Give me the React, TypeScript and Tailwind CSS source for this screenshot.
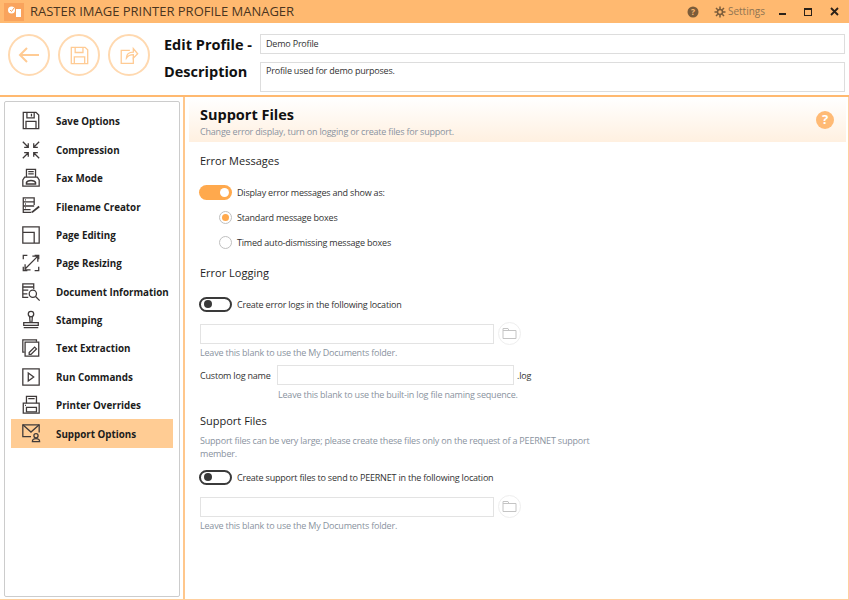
import React from "react";

const ic = { fill: "none", stroke: "#3f3a3a", strokeWidth: 1.4 } as const;

function Icon({ name }: { name: string }) {
  const p: Record<string, React.ReactNode> = {
    save: <><path d="M2.500 1.500h14l3 3v15h-17z" /><path d="M6.500 1.500v6h8v-6M11.500 3v3" /><path d="M5.500 19.500v-8h11v8" /></>,
    comp: <><path d="M2 2l6 6M8 3.500V8H3.500M20 2l-6 6M14 3.500V8h4.500M2 20l6-6M8 18.500V14H3.500M20 20l-6-6M14 18.500V14h4.500" /></>,
    fax: <><path d="M6 10V1.500h10V10M8 4h6M8 6.500h6" /><path d="M4 10h14l2 3v7H2v-7z" /><path d="M6 16c1-3 9-3 10 0v1.500H6z" strokeWidth="1.600" /></>,
    file: <><path d="M14.500 10V2H2.500v16h9" /><path d="M2.500 6.500h12M2.500 11h12M2.500 15h8M4.500 4.300h1M4.500 8.800h1M4.500 13h1" /><path d="M12 18l8-6.500" strokeWidth="2" /></>,
    edit: <><path d="M2 2h18v18H2zM2 8h12.500v12" /></>,
    resize: <><path d="M7 2.500H2.500V7M2.500 15v4.500H7M15 19.500h4.500V15M15 2.500h4.500V7" /><path d="M5 17L18 4M12.500 3.500h6v6M4.500 12.500v6h6" /></>,
    doc: <><path d="M14 8V2H2v15h6" /><path d="M2 5.500h12M2 9h6M2 13h5" /><circle cx="13" cy="13" r="4" /><path d="M16 16l4.500 4.500" /></>,
    stamp: <><circle cx="11" cy="4.500" r="3" /><path d="M9.500 7.500l.5 6h2l.5-6M3 14h16v3H3zM3 19.500h16" /></>,
    text: <><path d="M4 15.500H2V2h15v2" /><path d="M4.500 4.500H19.500V20H4.500z" /><path d="M9 16l6-6 2 2-6 6H9z" /></>,
    run: <><path d="M2 2h18v18H2z" /><path d="M8 6.500l6 4.500-6 4.500z" /></>,
    print: <><path d="M6 9V1.500h11V9M8 4h7" /><path d="M2.500 9h17.500v11H2.500z" /><path d="M6 13.500h11v5H6zM4.500 11.500h1" /></>,
    support: <><path d="M11 15H2V2h18v8.500" /><path d="M2 2l9 8 9-8" /><circle cx="16.500" cy="14" r="2.300" /><path d="M12.500 20.500c0-4.500 8-4.500 8 0z" /></>,
  };
  return (
    <svg width="20" height="20" viewBox="0 0 22 22" {...ic}>
      {p[name]}
    </svg>
  );
}

const items: [string, string][] = [
  ["save", "Save Options"],
  ["comp", "Compression"],
  ["fax", "Fax Mode"],
  ["file", "Filename Creator"],
  ["edit", "Page Editing"],
  ["resize", "Page Resizing"],
  ["doc", "Document Information"],
  ["stamp", "Stamping"],
  ["text", "Text Extraction"],
  ["run", "Run Commands"],
  ["print", "Printer Overrides"],
  ["support", "Support Options"],
];

function Toggle({ on }: { on?: boolean }) {
  return on ? (
    <div className="w-[33px] h-[15px] -ml-[1px] rounded-full bg-[#ffa94d] flex items-center justify-end pr-[3px]">
      <div className="w-[9px] h-[9px] rounded-full bg-white" />
    </div>
  ) : (
    <div className="w-[33px] h-[15px] -ml-[1px] rounded-full border-2 border-[#3a3a3a] bg-white flex items-center pl-[3px]">
      <div className="w-[8px] h-[8px] rounded-full bg-[#3a3a3a]" />
    </div>
  );
}

function Round({ children }: { children: React.ReactNode }) {
  return (
    <div className="w-[42px] h-[42px] rounded-full border-2 border-[#ffd9b0] flex items-center justify-center shrink-0">
      {children}
    </div>
  );
}

function Folder() {
  return (
    <div className="w-[23px] h-[23px] rounded-full border border-[#eeeeee] flex items-center justify-center shrink-0">
      <svg width="15" height="13" viewBox="0 0 15 13" fill="none" stroke="#c4c4c4" strokeWidth="1">
        <path d="M1 11.500V1.500h5l1 2h7v8zM1 3.500h6" />
      </svg>
    </div>
  );
}

function PathRow() {
  return (
    <div className="flex items-center gap-[4px] h-[23px]">
      <div className="w-[294px] h-[20px] border border-[#e3e3e3]" />
      <Folder />
    </div>
  );
}

const hint = "text-[9px] tracking-[-0.2px] leading-[13px] text-[#8a93a0] whitespace-nowrap";
const label = "text-[9px] tracking-[-0.2px] leading-[13px] text-[#333333] whitespace-nowrap";
const h2 = "text-[11px] leading-[16px] font-medium text-[#1e1e1e]";

export default function App() {
  return (
    <div
      className="w-[849px] h-[600px] bg-white flex flex-col overflow-hidden"
      style={{ fontFamily: '"Open Sans", "Noto Sans", sans-serif' }}
    >
      <div className="h-[23px] bg-[#ffb970] flex items-center shrink-0">
        <div className="w-[20px] h-[18px] ml-[4px] bg-[#f9a35c] flex items-center justify-center">
          <svg width="15" height="13" viewBox="0 0 15 13">
            <circle cx="4.500" cy="5" r="3.500" fill="#fff" />
            <path d="M9 4h5v8H9z" fill="#fff" />
            <path d="M3 5l1.500 1.500L7 3" stroke="#f9a35c" fill="none" />
          </svg>
        </div>
        <div className="ml-[6px] text-[13px] text-[#4a3520] whitespace-nowrap">RASTER IMAGE PRINTER PROFILE MANAGER</div>
        <div className="ml-auto flex items-center text-[#7b5c3a]">
          <svg width="12" height="12" viewBox="0 0 12 12">
            <circle cx="6" cy="6" r="5.500" fill="#7b5c3a" />
            <text x="6" y="9" textAnchor="middle" fontSize="8.500" fontWeight="700" fill="#ffb970">?</text>
          </svg>
          <svg className="ml-[15px]" width="12" height="12" viewBox="0 0 24 24" fill="none" stroke="#7b5c3a" strokeWidth="3">
            <circle cx="12" cy="12" r="5" />
            <path d="M12 1v5M12 18v5M1 12h5M18 12h5M4 4l3.500 3.500M16.500 16.500L20 20M20 4l-3.500 3.500M7.500 16.500L4 20" />
          </svg>
          <span className="ml-[2px] text-[10px] text-[#8f7452]">Settings</span>
          <div className="ml-[14px] w-[7px] h-[2px] mt-[5px] bg-[#2b2118]" />
          <div className="ml-[18px] w-[8px] h-[8px] border border-t-2 border-[#2b2118]" />
          <svg className="ml-[18px] mr-[10px]" width="9" height="9" viewBox="0 0 9 9" stroke="#2b2118" strokeWidth="1.800">
            <path d="M1 1l7 7M8 1l-7 7" />
          </svg>
        </div>
      </div>

      <div className="h-[74px] border-b-2 border-[#ffb970] flex items-start shrink-0 pl-[8px] pt-[11px]">
        <div className="flex gap-[8px]">
          <Round>
            <svg width="22" height="18" viewBox="0 0 22 18" fill="none" stroke="#ffcb94" strokeWidth="2">
              <path d="M21 9H2M9 2L2 9l7 7" />
            </svg>
          </Round>
          <Round>
            <svg width="19" height="19" viewBox="0 0 22 22" fill="none" stroke="#ffcb94" strokeWidth="1.500">
              <path d="M1.500 1.500h16l3 3v16h-19z" />
              <path d="M6 1.500v6h9v-6M5 20.500v-8h12v8" />
            </svg>
          </Round>
          <Round>
            <svg width="20" height="19" viewBox="0 0 22 22" fill="none" stroke="#ffcb94" strokeWidth="1.500">
              <path d="M12 5H2v15h14v-7" />
              <path d="M8 14c0-5 4-7 8-7V3l5 6-5 5v-4c-4 0-6 1-8 4z" />
            </svg>
          </Round>
        </div>
        <div className="ml-[14px] w-[96px] shrink-0 text-[14.5px] font-bold text-[#111111] leading-[20px]">
          <div className="mt-[1px] whitespace-nowrap">Edit Profile -</div>
          <div className="mt-[7px]">Description</div>
        </div>
        <div className="flex-1 mr-[4px] flex flex-col gap-[8px]">
          <div className="h-[20px] border border-[#dddddd] pl-[5px] text-[9px] tracking-[-0.2px] leading-[18px] text-[#333333]">Demo Profile</div>
          <div className="h-[30px] border border-[#dddddd] pl-[5px] text-[9px] tracking-[-0.2px] leading-[15px] text-[#333333]">Profile used for demo purposes.</div>
        </div>
      </div>

      <div className="flex-1 flex min-h-0 border-b border-[#ffcf9e] border-r">
        <div className="w-[185px] shrink-0 border-r-2 border-[#ffc78c] pl-[4px] pr-[3px] pt-[4px] pb-[2px]">
          <div className="h-full border border-[#cccccc] rounded-[2px] pt-[5px] px-[6px]">
            {items.map(([k, t]) => (
              <div
                key={k}
                className={`h-[28.4px] flex items-center pl-[10px] ${k === "support" ? "bg-[#ffcc94]" : ""}`}
              >
                <Icon name={k} />
                <span className="ml-[15px] mt-[3px] text-[9.8px] font-bold text-[#1c1c1c] whitespace-nowrap">{t}</span>
              </div>
            ))}
          </div>
        </div>

        <div className="flex-1 min-w-0">
          <div className="h-[44px] mt-[1px] bg-gradient-to-b from-white to-[#fff0e0] ml-[4px] mr-[2px] pl-[11px] relative">
            <div className="text-[14.5px] font-bold leading-[20px] pt-[7px] text-[#111111]">Support Files</div>
            <div className={`${hint} mt-[0px]`}>Change error display, turn on logging or create files for support.</div>
            <div className="absolute right-[12px] top-[13px] w-[18px] h-[18px] rounded-full bg-[#ffba75] text-white text-[13px] font-bold flex items-center justify-center">?</div>
          </div>

          <div className="pl-[15px]">
            <div className={`${h2} mt-[11px]`}>Error Messages</div>
            <div className="flex items-center gap-[5px] mt-[15px] h-[16px]">
              <Toggle on />
              <span className={label}>Display error messages and show as:</span>
            </div>
            <div className="flex items-center gap-[5px] mt-[9px] h-[16px] pl-[19px]">
              <div className="w-[13px] h-[13px] rounded-full border border-[#c0c0c0] flex items-center justify-center">
                <div className="w-[7px] h-[7px] rounded-full bg-[#ffa94d]" />
              </div>
              <span className={label}>Standard message boxes</span>
            </div>
            <div className="flex items-center gap-[5px] mt-[9px] h-[16px] pl-[19px]">
              <div className="w-[13px] h-[13px] rounded-full border border-[#c0c0c0]" />
              <span className={label}>Timed auto-dismissing message boxes</span>
            </div>

            <div className={`${h2} mt-[15px]`}>Error Logging</div>
            <div className="flex items-center gap-[5px] mt-[15px] h-[16px]">
              <Toggle />
              <span className={label}>Create error logs in the following location</span>
            </div>
            <div className="mt-[10px]"><PathRow /></div>
            <div className={`${hint} mt-[1px]`}>Leave this blank to use the My Documents folder.</div>
            <div className="flex items-center mt-[6px] h-[20px]">
              <span className={`${label} w-[77px]`}>Custom log name</span>
              <div className="w-[237px] h-[20px] border border-[#e3e3e3]" />
              <span className={`${label} ml-[3px]`}>.log</span>
            </div>
            <div className={`${hint} mt-[3px] pl-[78px]`}>Leave this blank to use the built-in log file naming sequence.</div>

            <div className={`${h2} mt-[12px]`}>Support Files</div>
            <div className={`${hint} mt-[5px]`}>Support files can be very large; please create these files only on the request of a PEERNET support</div>
            <div className={hint}>member.</div>
            <div className="flex items-center gap-[5px] mt-[9px] h-[16px]">
              <Toggle />
              <span className={label}>Create support files to send to PEERNET in the following location</span>
            </div>
            <div className="mt-[10px]"><PathRow /></div>
            <div className={`${hint} mt-[1px]`}>Leave this blank to use the My Documents folder.</div>
          </div>
        </div>
      </div>
    </div>
  );
}
